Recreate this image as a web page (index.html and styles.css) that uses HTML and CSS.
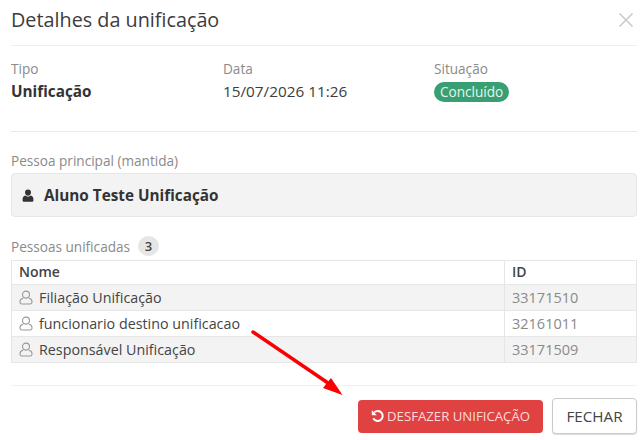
FILE: index.html
```html
<!DOCTYPE html>
<html lang="pt-BR">
<head>
<meta charset="utf-8">
<title>Detalhes da unificação</title>
<link rel="stylesheet" href="styles.css">
</head>
<body>
<div class="modal">
  <header class="modal-head">
    <h1>Detalhes da unificação</h1>
    <svg class="close" viewBox="0 0 16 16" width="16" height="16" aria-hidden="true"><path d="M1.500 1.500l13 13M14.500 1.500l-13 13"/></svg>
  </header>
  <section class="summary">
    <div><div class="label">Tipo</div><div class="value strong">Unificação</div></div>
    <div><div class="label">Data</div><div class="value">15/07/2026 11:26</div></div>
    <div><div class="label">Situação</div><span class="badge">Concluído</span></div>
  </section>
  <section class="main-person">
    <div class="label">Pessoa principal (mantida)</div>
    <div class="person-box">
      <svg class="solid-user" viewBox="0 0 12 13" width="12" height="13" aria-hidden="true"><path d="M6 0.400a3 3 0 0 1 3 3c0 1.800-1.300 3.400-3 3.400S3 5.200 3 3.400a3 3 0 0 1 3-3zM3.300 6.600C4 7.300 5 7.700 6 7.700s2-.4 2.700-1.100c1.700.3 2.700 1.700 2.700 3.600v1.300c0 .8-.6 1.300-1.300 1.300H1.900c-.7 0-1.300-.5-1.300-1.300v-1.300c0-1.900 1-3.300 2.700-3.600z"/></svg>
      <span>Aluno Teste Unificação</span>
    </div>
  </section>
  <section class="merged">
    <div class="merged-title"><span class="label">Pessoas unificadas</span><span class="count">3</span></div>
    <table>
      <thead><tr><th>Nome</th><th class="id-col">ID</th></tr></thead>
      <tbody>
        <tr><td><svg class="line-user" viewBox="0 0 14 15" width="14" height="15" aria-hidden="true"><circle cx="7" cy="4.600" r="3.500"/><path d="M4.200 8.200C2.300 8.600 1 9.800 1 11.600v.6c0 1 .7 1.800 1.800 1.800h8.400c1.100 0 1.800-.8 1.800-1.800v-.6c0-1.800-1.300-3-3.200-3.400"/></svg>Filiação Unificação</td><td class="id">33171510</td></tr>
        <tr><td><svg class="line-user" viewBox="0 0 14 15" width="14" height="15" aria-hidden="true"><circle cx="7" cy="4.600" r="3.500"/><path d="M4.200 8.200C2.300 8.600 1 9.800 1 11.600v.6c0 1 .7 1.800 1.800 1.800h8.400c1.100 0 1.800-.8 1.800-1.800v-.6c0-1.800-1.300-3-3.200-3.400"/></svg>funcionario destino unificacao</td><td class="id">32161011</td></tr>
        <tr><td><svg class="line-user" viewBox="0 0 14 15" width="14" height="15" aria-hidden="true"><circle cx="7" cy="4.600" r="3.500"/><path d="M4.200 8.200C2.300 8.600 1 9.800 1 11.600v.6c0 1 .7 1.800 1.800 1.800h8.400c1.100 0 1.800-.8 1.800-1.800v-.6c0-1.800-1.300-3-3.200-3.400"/></svg>Responsável Unificação</td><td class="id">33171509</td></tr>
      </tbody>
    </table>
  </section>
  <footer class="modal-foot">
    <button class="btn danger" type="button">
      <svg class="undo" viewBox="0 0 14 14" width="14" height="14" aria-hidden="true"><path class="undo-arc" d="M3.200 3.400A5 5 0 1 1 2.300 9.200"/><path class="undo-head" d="M0.800 1.200L5.800 6.200H0.800z"/></svg>DESFAZER UNIFICAÇÃO
    </button>
    <button class="btn plain" type="button">FECHAR</button>
  </footer>
</div>
<svg class="annotation" viewBox="0 0 644 440" width="644" height="440" aria-hidden="true">
  <path class="arrow-line" d="M253 332L331 385"/>
  <path class="arrow-head" d="M342.500 395L323 388L331 378z"/>
</svg>
</body>
</html>
```

FILE: styles.css
```css
* { box-sizing: border-box; }
html, body { margin: 0; padding: 0; }
body {
  width: 644px;
  height: 440px;
  overflow: hidden;
  background: #fff;
  color: #333;
  font-family: "Open Sans", "Liberation Sans", sans-serif;
  font-size: 14px;
  position: relative;
}
.modal { padding: 0 7px 0 11px; }
.modal-head {
  height: 46px;
  display: flex;
  align-items: center;
  justify-content: space-between;
  border-bottom: 1px solid #eee;
  padding-bottom: 6px;
}
h1 { margin: 0; font-size: 19.800px; line-height: 26px; font-weight: 400; color: #3c3c3c; }
.close { margin-right: 3px; fill: none; stroke: #c9c9c9; stroke-width: 1.500; }
.summary {
  height: 86px;
  display: grid;
  grid-template-columns: 212px 211px 1fr;
  align-content: start;
  padding-top: 14px;
  border-bottom: 1px solid #e9e9e9;
}
.label { font-size: 13.600px; line-height: 17px; color: #8a8a8a; }
.value { font-size: 15.300px; line-height: 20px; margin-top: 4px; color: #3c3c3c; }
.strong { font-weight: 700; color: #333; }
.badge {
  display: inline-block;
  margin-top: 5px;
  height: 20px;
  padding: 0 6px;
  border-radius: 10px;
  background: #379f71;
  color: #e6f4ee;
  font-size: 13.600px;
  line-height: 20px;
}
.main-person { padding-top: 20px; }
.person-box {
  height: 44px;
  margin-top: 4px;
  display: flex;
  align-items: center;
  gap: 10px;
  padding-left: 10px;
  background: #f3f3f3;
  border: 1px solid #e7e7e7;
  border-radius: 4px;
  font-size: 15.300px;
  font-weight: 700;
  color: #333;
}
.solid-user { fill: #333; }
.merged { padding-top: 19px; }
.merged-title { display: flex; align-items: center; gap: 8px; height: 20px; margin-bottom: 4px; }
.count {
  width: 21px;
  height: 20px;
  border-radius: 50%;
  background: #e6e6e6;
  color: #444;
  font-size: 13px;
  line-height: 20px;
  text-align: center;
  font-weight: 600;
}
table { width: 100%; border-collapse: collapse; table-layout: fixed; border: 1px solid #e6e6e6; }
th, td { border: 1px solid #e6e6e6; padding: 0 7px 1px; text-align: left; color: #444; white-space: nowrap; }
th { height: 24px; font-size: 14px; font-weight: 600; padding-bottom: 2px; }
td { height: 26px; font-size: 14.300px; }
tbody tr:nth-child(odd) td { background: #f3f3f3; }
.id-col { width: 132px; }
td.id { color: #8a8a8a; font-size: 14.500px; }
.line-user { vertical-align: -2px; margin-right: 6px; fill: none; stroke: #9a9a9a; stroke-width: 1.100; }
.modal-foot {
  margin-top: 22px;
  padding-top: 12px;
  border-top: 1px solid #f1f1f1;
  display: flex;
  justify-content: flex-end;
  align-items: center;
  gap: 9px;
}
.btn { font-family: inherit; border-radius: 4px; padding: 0; }
.danger {
  width: 185px;
  height: 33px;
  border: 0;
  background: #e04141;
  color: #fbdcdc;
  display: flex;
  align-items: center;
  justify-content: center;
  gap: 2px;
  font-size: 13.200px;
}
.undo-arc { fill: none; stroke: #fff; stroke-width: 2; }
.undo-head { fill: #fff; }
.plain {
  width: 85px;
  height: 36px;
  background: #fff;
  border: 1px solid #c9c9c9;
  color: #444;
  font-size: 15.200px;
  box-shadow: 0 1px 1px #ddd;
}
.annotation { position: absolute; left: 0; top: 0; pointer-events: none; }
.arrow-line { fill: none; stroke: #fa0000; stroke-width: 3.500; stroke-linecap: round; }
.arrow-head { fill: #fa0000; }
```
